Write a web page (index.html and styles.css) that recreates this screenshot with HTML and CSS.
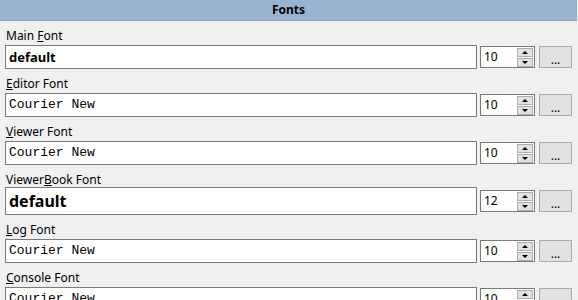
FILE: index.html
```html
<!DOCTYPE html>
<html lang="en">
  <head>
    <meta charset="UTF-8" />
    <title>Fonts</title>
    <link rel="stylesheet" href="styles.css">
  </head>
  <body>
    <div class="panel">
      <div class="panel-title">Fonts</div>

      <div class="font-list">
        <!-- Main font -->
        <div class="font-row">
          <label class="font-label">Main <u>F</u>ont</label>
          <div class="font-controls">
            <div class="font-name font-default">default</div>
            <div class="spin">
              <span class="spin-value">10</span>
              <div class="spin-btns">
                <span class="spin-btn up"></span>
                <span class="spin-btn down"></span>
              </div>
            </div>
            <button class="browse">...</button>
          </div>
        </div>

        <!-- Editor font -->
        <div class="font-row">
          <label class="font-label"><u>E</u>ditor Font</label>
          <div class="font-controls">
            <div class="font-name font-mono">Courier New</div>
            <div class="spin">
              <span class="spin-value">10</span>
              <div class="spin-btns">
                <span class="spin-btn up"></span>
                <span class="spin-btn down"></span>
              </div>
            </div>
            <button class="browse">...</button>
          </div>
        </div>

        <!-- Viewer font -->
        <div class="font-row">
          <label class="font-label"><u>V</u>iewer Font</label>
          <div class="font-controls">
            <div class="font-name font-mono">Courier New</div>
            <div class="spin">
              <span class="spin-value">10</span>
              <div class="spin-btns">
                <span class="spin-btn up"></span>
                <span class="spin-btn down"></span>
              </div>
            </div>
            <button class="browse">...</button>
          </div>
        </div>

        <!-- ViewerBook font -->
        <div class="font-row tall">
          <label class="font-label">Viewer<u>B</u>ook Font</label>
          <div class="font-controls">
            <div class="font-name font-default big">default</div>
            <div class="spin">
              <span class="spin-value">12</span>
              <div class="spin-btns">
                <span class="spin-btn up"></span>
                <span class="spin-btn down"></span>
              </div>
            </div>
            <button class="browse">...</button>
          </div>
        </div>

        <!-- Log font -->
        <div class="font-row">
          <label class="font-label"><u>L</u>og Font</label>
          <div class="font-controls">
            <div class="font-name font-mono">Courier New</div>
            <div class="spin">
              <span class="spin-value">10</span>
              <div class="spin-btns">
                <span class="spin-btn up"></span>
                <span class="spin-btn down"></span>
              </div>
            </div>
            <button class="browse">...</button>
          </div>
        </div>

        <!-- Console font -->
        <div class="font-row">
          <label class="font-label"><u>C</u>onsole Font</label>
          <div class="font-controls">
            <div class="font-name font-mono">Courier New</div>
            <div class="spin">
              <span class="spin-value">10</span>
              <div class="spin-btns">
                <span class="spin-btn up"></span>
                <span class="spin-btn down"></span>
              </div>
            </div>
            <button class="browse">...</button>
          </div>
        </div>
      </div>
    </div>
  </body>
</html>
```

FILE: styles.css
```css
body {
  margin: 0;
  background-color: #f0f0f0;
  font-family: "Noto Sans", "Open Sans", sans-serif;
  font-size: 12px;
  color: #000;
  overflow: hidden;
}

.panel {
  width: 578px;
}

.panel-title {
  height: 20px;
  line-height: 20px;
  background-color: #99b4d1;
  border-bottom: 1px solid #a0a0a0;
  text-align: center;
  font-weight: bold;
  margin-right: 1px;
}

.font-list {
  padding: 0 6px 0 5px;
}

.font-row {
  margin-top: 7px;
}

.font-label {
  display: block;
  height: 15px;
  line-height: 15px;
  padding-left: 1px;
  margin-bottom: 2px;
}

.font-row.tall .font-label {
  margin-bottom: 0;
}

.font-controls {
  display: flex;
  align-items: center;
}

.font-name {
  flex: 1;
  height: 22px;
  line-height: 22px;
  background: #fff;
  border: 1px solid #7a7a7a;
  padding-left: 3px;
  white-space: nowrap;
  overflow: hidden;
}

.font-default {
  font-family: "Noto Sans", "Open Sans", sans-serif;
  font-weight: bold;
  font-size: 13px;
}

.font-default.big {
  height: 26px;
  line-height: 26px;
  font-size: 16px;
}

.font-mono {
  font-family: "Liberation Mono", "Courier New", monospace;
  font-size: 13px;
}

.spin {
  display: flex;
  align-items: center;
  justify-content: space-between;
  width: 53px;
  height: 20px;
  margin-left: 3px;
  background: #fff;
  border: 1px solid #7a7a7a;
}

.spin-value {
  padding-left: 3px;
  line-height: 20px;
}

.spin-btns {
  display: flex;
  flex-direction: column;
  gap: 1px;
  padding: 0 1px 0 0;
}

.spin-btn {
  position: relative;
  display: block;
  width: 14px;
  height: 7px;
  background: #e1e1e1;
  border: 1px solid #adadad;
}

/* small black arrow inside each spin button */
.spin-btn::after {
  content: "";
  position: absolute;
  left: 4px;
  top: 2px;
  border-left: 3px solid transparent;
  border-right: 3px solid transparent;
}

.spin-btn.up::after {
  border-bottom: 3px solid #000;
}

.spin-btn.down::after {
  border-top: 3px solid #000;
}

.browse {
  width: 33px;
  height: 22px;
  margin-left: 4px;
  padding: 0 0 2px;
  background: #e1e1e1;
  border: 1px solid #adadad;
  font-family: "Noto Sans", "Open Sans", sans-serif;
  font-size: 12px;
  color: #000;
  line-height: 26px;
}
```
